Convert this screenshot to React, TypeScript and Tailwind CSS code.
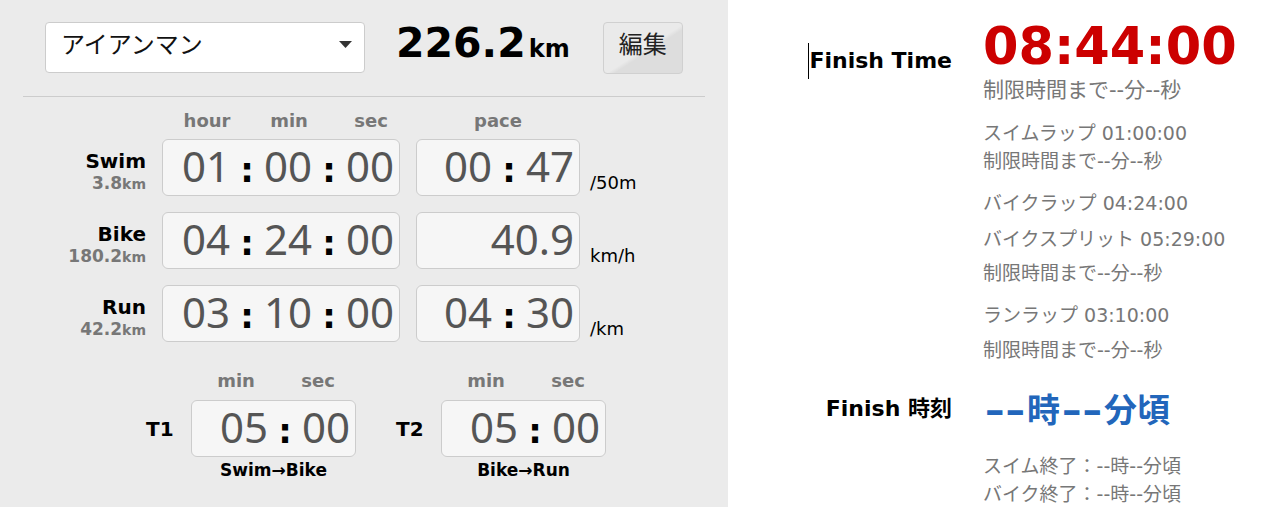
import { Fragment } from "react";

const SANS = "font-['DejaVu_Sans','Noto_Sans_CJK_JP',sans-serif]";
const DIGITS = "font-['Noto_Sans','DejaVu_Sans',sans-serif]";

function TimeBox({ parts, width }: { parts: string[]; width: string }) {
  return (
    <div
      className={`${width} h-[57px] shrink-0 flex items-center justify-end pr-[5px] pb-[4px] bg-[#f6f6f6] border border-[#cccccc] rounded-[6px]`}
    >
      <div className="flex items-baseline">
        {parts.length === 1 ? (
          <span className={`${DIGITS} text-[42px] leading-none text-[#555555]`}>{parts[0]}</span>
        ) : (
          parts.map((p, i) => (
            <Fragment key={i}>
              {i > 0 && (
                <span className={`${SANS} w-[34px] text-center text-[34px] leading-none font-bold text-black`}>:</span>
              )}
              <span className={`${DIGITS} w-[48px] text-center text-[42px] leading-none text-[#555555]`}>{p}</span>
            </Fragment>
          ))
        )}
      </div>
    </div>
  );
}

function Heads({ labels, width, pr }: { labels: string[]; width: string; pr: string }) {
  return (
    <div className={`${width} ${pr} h-[22px] flex justify-end`}>
      {labels.map((l, i) => (
        <Fragment key={l}>
          {i > 0 && <span className="w-[34px]" />}
          <span className="w-[48px] flex justify-center whitespace-nowrap text-[18px] leading-[22px] font-bold text-[#777777]">
            {l}
          </span>
        </Fragment>
      ))}
    </div>
  );
}

const legs = [
  { name: "Swim", dist: "3.8", time: ["01", "00", "00"], pace: ["00", "47"], unit: "/50m" },
  { name: "Bike", dist: "180.2", time: ["04", "24", "00"], pace: ["40.9"], unit: "km/h" },
  { name: "Run", dist: "42.2", time: ["03", "10", "00"], pace: ["04", "30"], unit: "/km" },
];

const transitions = [
  { name: "T1", sub: "Swim→Bike" },
  { name: "T2", sub: "Bike→Run" },
];

function Dash() {
  return <span className="inline-block w-[44px] text-center scale-x-150">--</span>;
}

export default function App() {
  return (
    <div className={`${SANS} flex w-full h-[507px] overflow-hidden text-black`}>
      {/* 入力側 */}
      <div className="w-[728px] shrink-0 h-full bg-[#ebebeb]">
        <div className="flex items-start pt-[22px]">
          <div className="ml-[45px] w-[320px] h-[51px] bg-white border border-[#cccccc] rounded-[4px] flex items-center justify-between pl-[15px] pr-[12px] pb-[6px]">
            <span className="text-[24px] leading-none text-[#111111]">アイアンマン</span>
            <svg width="13" height="7" viewBox="0 0 13 7">
              <polygon points="0,0 13,0 6.5,7" fill="#333333" />
            </svg>
          </div>
          <div className="ml-[31px] mt-[1px] flex items-baseline font-bold">
            <span className="text-[41px] leading-none">226.2</span>
            <span className="ml-[3px] text-[24px] leading-none">km</span>
          </div>
          <button className="ml-[33px] w-[80px] h-[52px] border border-[#d0d0d0] rounded-[4px] bg-[linear-gradient(to_bottom_right,#eaeaea_52%,#dddddd_57%)] flex items-center justify-center pb-[6px] text-[24px] leading-none text-[#222222]">
            編集
          </button>
        </div>

        <div className="mx-[23px] mt-[22px] h-px bg-[#cccccc]" />

        <div className="mt-[13px] flex pl-[162px]">
          <Heads labels={["hour", "min", "sec"]} width="w-[238px]" pr="pr-[5px]" />
          <div className="ml-[16px] w-[164px] text-center text-[18px] leading-[22px] font-bold text-[#777777]">pace</div>
        </div>

        <div className="mt-[7px] flex flex-col gap-[16px]">
          {legs.map((leg) => (
            <div key={leg.name} className="flex">
              <div className="w-[146px] shrink-0 text-right pt-[10px]">
                <div className="text-[20px] leading-[24px] font-bold">{leg.name}</div>
                <div className="text-[17px] leading-[21px] font-bold text-[#777777]">
                  {leg.dist}
                  <span className="text-[14px]">km</span>
                </div>
              </div>
              <div className="ml-[16px]">
                <TimeBox parts={leg.time} width="w-[238px]" />
              </div>
              <div className="ml-[16px]">
                <TimeBox parts={leg.pace} width="w-[164px]" />
              </div>
              <div className="ml-[10px] self-end mb-[1px] text-[18px] leading-[24px]">{leg.unit}</div>
            </div>
          ))}
        </div>

        <div className="mt-[28px] flex pl-[146px] gap-[40px]">
          {transitions.map((t) => (
            <div key={t.name} className="flex items-start">
              <div className="w-[30px] mt-[30px] h-[57px] flex items-center text-[20px] leading-none font-bold">{t.name}</div>
              <div className="ml-[15px] flex flex-col items-center">
                <Heads labels={["min", "sec"]} width="w-[165px]" pr="pr-[14px]" />
                <div className="mt-[8px]">
                  <TimeBox parts={["05", "00"]} width="w-[165px]" />
                </div>
                <div className="mt-[2px] text-[17px] leading-[22px] font-bold">{t.sub}</div>
              </div>
            </div>
          ))}
        </div>
      </div>

      {/* 結果側 */}
      <div className="flex-1 bg-white pt-[19px]">
        <div className="flex items-start">
          <div className="w-[224px] shrink-0 mt-[24px] text-right text-[22px] leading-[36px] font-bold">
            <span className="inline-block w-px h-[36px] bg-black align-top" />
            Finish Time
          </div>
          <div className="ml-[31px] flex flex-col text-[#777777] whitespace-nowrap">
            <div className="text-[51px] leading-[56px] font-bold text-[#cc0000]">08:44:00</div>
            <div className="text-[21px] leading-[30px]">制限時間まで--分--秒</div>
            <div className="mt-[14px] text-[19px] leading-[28px]">スイムラップ 01:00:00</div>
            <div className="text-[19px] leading-[28px]">制限時間まで--分--秒</div>
            <div className="mt-[14px] text-[19px] leading-[28px]">バイクラップ 04:24:00</div>
            <div className="mt-[8px] text-[19px] leading-[28px]">バイクスプリット 05:29:00</div>
            <div className="mt-[6px] text-[19px] leading-[28px]">制限時間まで--分--秒</div>
            <div className="mt-[14px] text-[19px] leading-[28px]">ランラップ 03:10:00</div>
            <div className="mt-[7px] text-[19px] leading-[28px]">制限時間まで--分--秒</div>
          </div>
        </div>

        <div className="mt-[27px] flex items-start">
          <div className="w-[224px] shrink-0 text-right text-[22px] leading-[36px] font-bold">Finish 時刻</div>
          <div className="ml-[31px] flex flex-col text-[#777777] whitespace-nowrap">
            <div className="text-[33px] leading-[40px] font-bold text-[#2266bb]">
              <Dash />時<Dash />分頃
            </div>
            <div className="mt-[21px] text-[19px] leading-[28px]">スイム終了：--時--分頃</div>
            <div className="text-[19px] leading-[28px]">バイク終了：--時--分頃</div>
          </div>
        </div>
      </div>
    </div>
  );
}
